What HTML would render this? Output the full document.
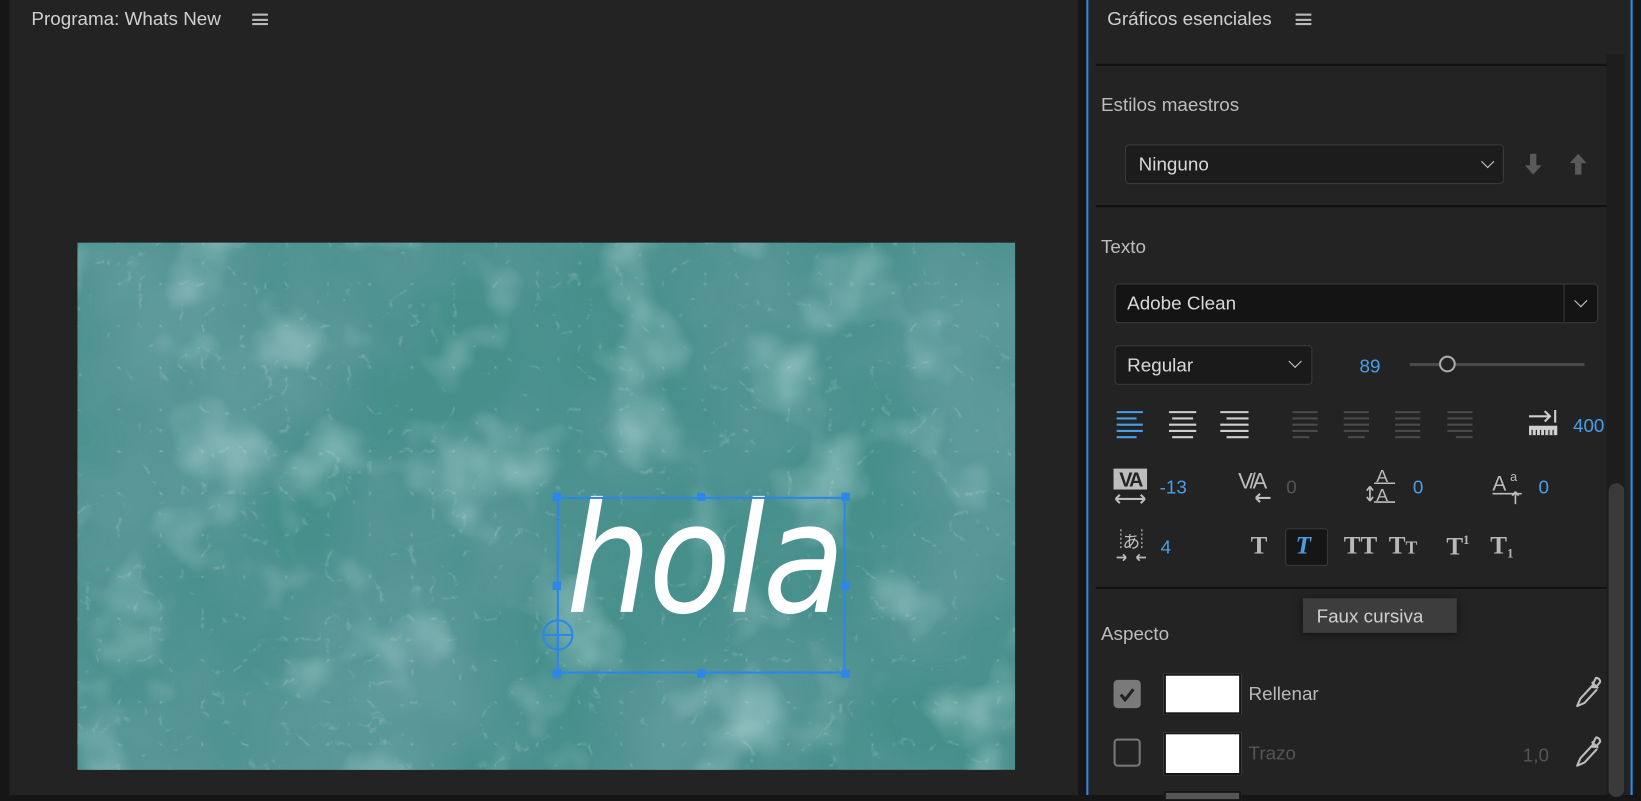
<!DOCTYPE html>
<html><head><meta charset="utf-8">
<style>
html,body{margin:0;padding:0;background:#161616;overflow:hidden;width:1641px;height:795px}
#w{position:absolute;left:0;top:0;width:1568px;height:760px;transform:scale(1.04656,1.046);transform-origin:0 0;font-family:"Liberation Sans","DejaVu Sans",sans-serif;}
.a{position:absolute}
.t{position:absolute;white-space:nowrap;font-size:18px;color:#bdbdbd;line-height:1}
.blue{color:#4a9ee8}
.sep{position:absolute;height:2px;background:#111;left:1047px;width:488px}
.box{position:absolute;background:#1c1c1c;border:1px solid #3a3a3a;border-radius:4px;box-sizing:border-box}
.ham{position:absolute;width:15px;height:11px;border-top:2px solid #bbb;border-bottom:2px solid #bbb;box-sizing:border-box}
.ham:after{content:"";position:absolute;left:0;right:0;top:2.5px;height:2px;background:#bbb}
.chev{position:absolute;width:8px;height:8px;border-right:1.6px solid #ccc;border-bottom:1.6px solid #ccc;transform:rotate(45deg)}
.serif{font-family:"Liberation Serif","DejaVu Serif",serif;font-weight:bold;color:#b8b8b8;position:absolute;line-height:1}
</style></head><body><div id="w">
<div class="a" style="left:9px;top:0;width:1021px;height:760px;background:#232323"></div>
<div class="t" style="left:30px;top:9px;font-size:18px;color:#d0d0d0">Programa: Whats New</div>
<div class="ham" style="left:241px;top:13px"></div>
<svg class="a" style="left:74px;top:232px" width="896" height="504">
<defs>
<filter id="f1" x="0" y="0" width="100%" height="100%">
<feTurbulence type="fractalNoise" baseFrequency="0.005" numOctaves="4" seed="4" result="n"/>
<feColorMatrix in="n" type="matrix" values="0 0 0 0 0.12  0 0 0 0 0.33  0 0 0 0 0.34  0 0 0 -2.2 1.5"/>
</filter>
<filter id="f2" x="0" y="0" width="100%" height="100%">
<feTurbulence type="turbulence" baseFrequency="0.025" numOctaves="5" seed="7" result="n"/>
<feColorMatrix in="n" type="matrix" values="0 0 0 0 1  0 0 0 0 1  0 0 0 0 1  -4 0 0 0 0.5"/>
</filter>
<filter id="f3" x="0" y="0" width="100%" height="100%">
<feTurbulence type="fractalNoise" baseFrequency="0.012" numOctaves="3" seed="11" result="n"/>
<feColorMatrix in="n" type="matrix" values="0 0 0 0 0.6  0 0 0 0 0.8  0 0 0 0 0.8  0 0 0 2.5 -1.3"/>
</filter>
</defs>
<rect width="896" height="504" fill="#468f8b"/>
<rect width="896" height="504" filter="url(#f1)" opacity="0.9"/>
<rect width="896" height="504" filter="url(#f3)" opacity="0.5"/>
<rect width="896" height="504" filter="url(#f2)" opacity="0.45"/>
</svg>
<div class="a" style="left:541px;top:462px;font-family:'DejaVu Sans','Liberation Sans',sans-serif;font-style:italic;font-size:146px;color:#fff;letter-spacing:-3px;line-height:1;transform:scaleX(0.88);transform-origin:0 0">hola</div>
<div class="a" style="left:532px;top:475px;width:276px;height:169px;border:2px solid #2d86ea;box-sizing:border-box"></div>
<div class="a" style="left:528px;top:471px;width:8px;height:8px;background:#2d86ea"></div>
<div class="a" style="left:666px;top:471px;width:8px;height:8px;background:#2d86ea"></div>
<div class="a" style="left:804px;top:471px;width:8px;height:8px;background:#2d86ea"></div>
<div class="a" style="left:528px;top:556px;width:8px;height:8px;background:#2d86ea"></div>
<div class="a" style="left:804px;top:556px;width:8px;height:8px;background:#2d86ea"></div>
<div class="a" style="left:528px;top:640px;width:8px;height:8px;background:#2d86ea"></div>
<div class="a" style="left:666px;top:640px;width:8px;height:8px;background:#2d86ea"></div>
<div class="a" style="left:804px;top:640px;width:8px;height:8px;background:#2d86ea"></div>
<svg class="a" style="left:517px;top:591px" width="32" height="32"><circle cx="16" cy="16" r="14" fill="none" stroke="#2d86ea" stroke-width="2"/><line x1="2" y1="16" x2="30" y2="16" stroke="#2d86ea" stroke-width="2"/><line x1="16" y1="2" x2="16" y2="30" stroke="#2d86ea" stroke-width="2"/></svg>
<div class="a" style="left:1038px;top:0;width:2px;height:760px;background:#2d8ceb"></div>
<div class="a" style="left:1040px;top:0;width:518px;height:760px;background:#232323"></div>
<div class="a" style="left:1558px;top:0;width:2px;height:760px;background:#2d8ceb"></div>
<div class="a" style="left:1535px;top:52px;width:18px;height:708px;background:#1d1d1d"></div>
<div class="a" style="left:1537px;top:462px;width:15px;height:300px;background:#3a3a3a;border-radius:8px"></div>
<div class="t" style="left:1058px;top:9px;color:#d0d0d0">Gráficos esenciales</div>
<div class="ham" style="left:1238px;top:13px"></div>
<div class="sep" style="top:61px"></div>
<div class="t" style="left:1052px;top:91px">Estilos maestros</div>
<div class="box" style="left:1075px;top:138px;width:362px;height:38px"></div>
<div class="t" style="left:1088px;top:148px;color:#d8d8d8">Ninguno</div>
<div class="chev" style="left:1417px;top:150px"></div>
<svg class="a" style="left:1455px;top:145px" width="64" height="24"><path d="M7 2h6v11h5l-8 9-8-9h5z" fill="#5a5a5a"/><path d="M50 22h6V11h5l-8-9-8 9h5z" fill="#5a5a5a"/></svg>
<div class="sep" style="top:196px"></div>
<div class="t" style="left:1052px;top:227px">Texto</div>
<div class="box" style="left:1065px;top:271px;width:462px;height:38px;background:#141414"></div>
<div class="a" style="left:1494px;top:272px;width:1px;height:36px;background:#3a3a3a"></div>
<div class="t" style="left:1077px;top:281px;color:#d8d8d8">Adobe Clean</div>
<div class="chev" style="left:1506px;top:283px"></div>
<div class="box" style="left:1065px;top:330px;width:189px;height:38px;background:#1a1a1a"></div>
<div class="t" style="left:1077px;top:340px;color:#d8d8d8">Regular</div>
<div class="chev" style="left:1233px;top:341px"></div>
<div class="t blue" style="left:1299px;top:341px">89</div>
<div class="a" style="left:1347px;top:347px;width:167px;height:3px;background:#4a4a4a"></div>
<div class="a" style="left:1375px;top:340px;width:12px;height:12px;border:2px solid #aaa;border-radius:50%;background:#232323"></div>
<svg class="a" style="left:1060px;top:390px" width="360" height="30">
<g stroke-width="2">
<g stroke="#4a9ee8"><path d="M7 4h25M7 10h19M7 16h25M7 22h25M7 28h19"/></g>
<g stroke="#cfcfcf"><path d="M57 4h26M60 10h20M57 16h26M57 22h26M60 28h20"/><path d="M106 4h27M112 10h21M106 16h27M106 22h27M112 28h21"/></g>
<g stroke="#4a4a4a"><path d="M175 4h24M175 10h24M175 16h24M175 22h24M175 28h16"/><path d="M224 4h24M224 10h24M224 16h24M224 22h24M228 28h16"/><path d="M273 4h24M273 10h24M273 16h24M273 22h24M273 28h24"/><path d="M323 4h24M323 10h24M323 16h24M323 22h24M331 28h16"/></g>
</g></svg>
<svg class="a" style="left:1459px;top:391px" width="32" height="28"><path d="M2 7h20M17 2l5 5-5 5" stroke="#cfcfcf" stroke-width="2" fill="none"/><path d="M27 1v12" stroke="#cfcfcf" stroke-width="2"/><rect x="2" y="16" width="27" height="9" fill="#cfcfcf"/><path d="M5 20v5M9 20v5M13 20v5M17 20v5M21 20v5M25 20v5" stroke="#232323" stroke-width="1.2"/></svg>
<div class="t blue" style="left:1503px;top:398px">400</div>
<svg class="a" style="left:1063px;top:447px" width="34" height="36"><rect x="1" y="1" width="32" height="20" fill="#bdbdbd"/><text x="17" y="18" text-anchor="middle" font-family="Liberation Sans" font-weight="bold" font-size="19" fill="#232323" letter-spacing="-2">VA</text><path d="M3 30h28M3 30l4-4M3 30l4 4M31 30l-4-4M31 30l-4 4" stroke="#bdbdbd" stroke-width="2" fill="none"/></svg>
<div class="t blue" style="left:1108px;top:457px">-13</div>
<svg class="a" style="left:1183px;top:447px" width="34" height="36"><text x="0" y="20" font-family="Liberation Sans" font-size="21" fill="#bdbdbd" letter-spacing="-3">V/A</text><path d="M17 29h14M17 29l4-4M17 29l4 4" stroke="#bdbdbd" stroke-width="2" fill="none"/></svg>
<div class="t" style="left:1229px;top:457px;color:#555">0</div>
<svg class="a" style="left:1304px;top:443px" width="34" height="40"><text x="11" y="18" font-family="Liberation Sans" font-size="17" fill="#bdbdbd">A</text><path d="M9 19h20" stroke="#bdbdbd" stroke-width="1.5"/><text x="11" y="36" font-family="Liberation Sans" font-size="17" fill="#bdbdbd">A</text><path d="M9 37h20M5 22v14M5 22l-3 4M5 22l3 4M5 36l-3-4M5 36l3-4" stroke="#bdbdbd" stroke-width="1.6" fill="none"/></svg>
<div class="t blue" style="left:1350px;top:457px">0</div>
<svg class="a" style="left:1426px;top:447px" width="34" height="36"><text x="0" y="22" font-family="Liberation Sans" font-size="20" fill="#bdbdbd">A</text><text x="17" y="13" font-family="Liberation Sans" font-size="12" fill="#bdbdbd">a</text><path d="M0 25h28M22 35V23M22 23l-3 4M22 23l3 4" stroke="#bdbdbd" stroke-width="1.6" fill="none"/></svg>
<div class="t blue" style="left:1470px;top:457px">0</div>
<svg class="a" style="left:1066px;top:504px" width="32" height="36"><path d="M5 2v20M25 2v20" stroke="#aaa" stroke-width="1.3" stroke-dasharray="2 2"/><text x="15" y="20" text-anchor="middle" font-family="Noto Sans CJK JP" font-size="17" fill="#bdbdbd">あ</text><path d="M1 29h9M10 29l-3-3M10 29l-3 3M29 29h-9M20 29l3-3M20 29l3 3" stroke="#bdbdbd" stroke-width="1.6" fill="none"/></svg>
<div class="t blue" style="left:1109px;top:514px">4</div>
<div class="serif" style="left:1195px;top:510px;font-size:24px">T</div>
<div class="a" style="left:1228px;top:505px;width:41px;height:36px;background:#161616;border:1px solid #3a3a3a;border-radius:3px;box-sizing:border-box"></div>
<div class="serif" style="left:1238px;top:510px;font-size:24px;font-style:italic;color:#4a9ee8">T</div>
<div class="serif" style="left:1284px;top:510px;font-size:24px">TT</div>
<div class="serif" style="left:1327px;top:510px;font-size:24px">T<span style="font-size:17px">T</span></div>
<div class="serif" style="left:1382px;top:510px;font-size:24px">T<span style="font-size:12px;vertical-align:10px">1</span></div>
<div class="serif" style="left:1424px;top:510px;font-size:24px">T<span style="font-size:12px;vertical-align:-4px">1</span></div>
<div class="sep" style="top:561px"></div>
<div class="t" style="left:1052px;top:597px">Aspecto</div>
<div class="a" style="left:1245px;top:572px;width:147px;height:33px;background:#3d3d3d;box-shadow:0 2px 8px rgba(0,0,0,.5)"></div>
<div class="t" style="left:1258px;top:580px;color:#d0d0d0">Faux cursiva</div>
<div class="a" style="left:1064px;top:650px;width:26px;height:27px;background:#7a7a7a;border-radius:4px"></div>
<svg class="a" style="left:1064px;top:650px" width="26" height="27"><path d="M7 14l4 5 8-10" stroke="#222" stroke-width="3" fill="none"/></svg>
<div class="a" style="left:1112px;top:644px;width:74px;height:39px;background:#fff;border:2px solid #151515;box-sizing:border-box"></div>
<div class="t" style="left:1193px;top:654px;color:#b8b8b8">Rellenar</div>
<svg class="a" style="left:1503px;top:646px" width="28" height="32"><path d="M22 2a4 4 0 0 1 4 4l-4 5-3 0 0-3z M18 6l6 6M19 9l-12 13-3 7 7-3 12-13" stroke="#bdbdbd" stroke-width="2" fill="none" stroke-linejoin="round"/></svg>
<div class="a" style="left:1064px;top:706px;width:26px;height:27px;border:2px solid #777;border-radius:4px;box-sizing:border-box"></div>
<div class="a" style="left:1112px;top:700px;width:74px;height:41px;background:#fff;border:2px solid #151515;box-sizing:border-box"></div>
<div class="t" style="left:1193px;top:711px;color:#555">Trazo</div>
<div class="t" style="left:1455px;top:713px;color:#555">1,0</div>
<svg class="a" style="left:1503px;top:703px" width="28" height="32"><path d="M22 2a4 4 0 0 1 4 4l-4 5-3 0 0-3z M18 6l6 6M19 9l-12 13-3 7 7-3 12-13" stroke="#bdbdbd" stroke-width="2" fill="none" stroke-linejoin="round"/></svg>
<div class="a" style="left:1112px;top:756px;width:74px;height:10px;background:#555;border:2px solid #151515;box-sizing:border-box"></div>
</div></body></html>
